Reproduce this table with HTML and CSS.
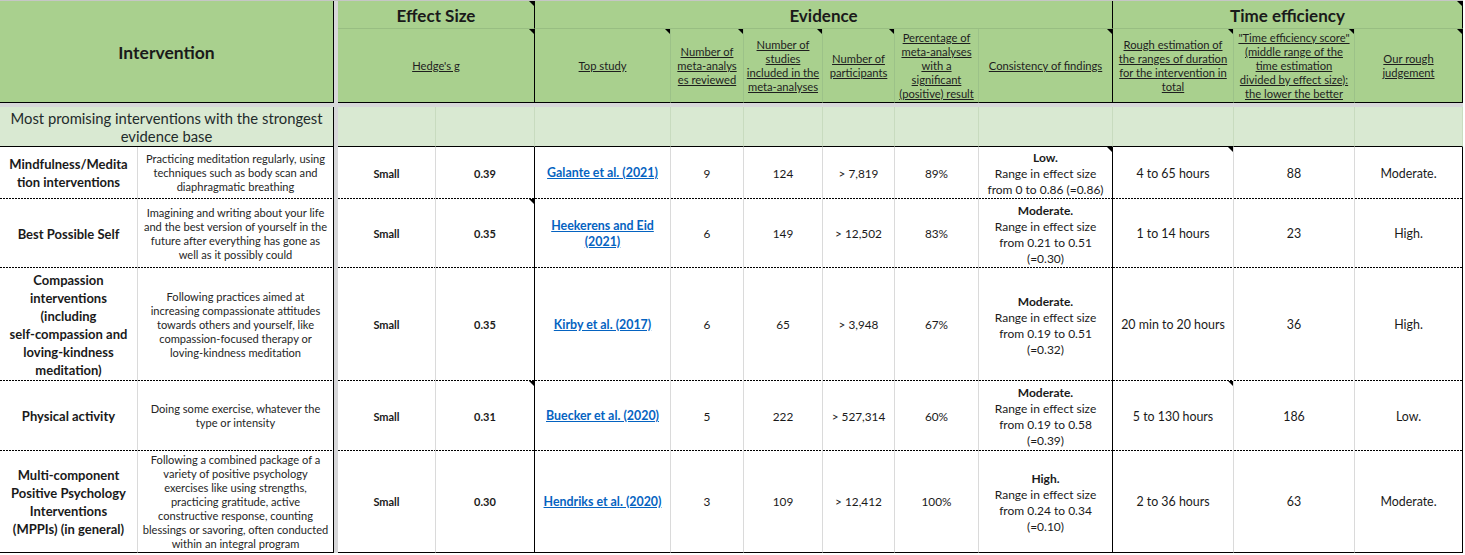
FILE: index.html
```html
<!DOCTYPE html>
<html lang="en">
<head>
<meta charset="utf-8">
<title>Interventions</title>
<link rel="stylesheet" href="styles.css">
</head>
<body>
<div class="sheet">
  <div class="gapc"></div>
  <div class="gapr"></div>

  <div class="c h hi">Intervention</div>
  <div class="c h h1 s2 edge cm">Effect Size</div>
  <div class="c h h1 s6 edge">Evidence</div>
  <div class="c h h1 s3 edge cm">Time efficiency</div>

  <div class="c h h2 s2 edge cm"><span>Hedge's g</span></div>
  <div class="c h h2 cm"><span>Top study</span></div>
  <div class="c h h2 cm"><span>Number of<br>meta-analys<br>es reviewed</span></div>
  <div class="c h h2 cm"><span>Number of<br>studies<br>included in the<br>meta-analyses</span></div>
  <div class="c h h2 cm"><span>Number of<br>participants</span></div>
  <div class="c h h2"><span>Percentage of<br>meta-analyses<br>with a<br>significant<br>(positive) result</span></div>
  <div class="c h h2 edge cm"><span>Consistency of findings</span></div>
  <div class="c h h2 cm"><span>Rough estimation of<br>the ranges of duration<br>for the intervention in<br>total</span></div>
  <div class="c h h2 cm"><span>"Time efficiency score"<br>(middle range of the<br>time estimation<br>divided by effect size):<br>the lower the better</span></div>
  <div class="c h h2 edge cm"><span>Our rough<br>judgement</span></div>

  <div class="c p pt s2">Most promising interventions with the strongest<br>evidence base</div>
  <div class="c p"></div><div class="c p"></div><div class="c p"></div><div class="c p"></div>
  <div class="c p"></div><div class="c p"></div><div class="c p"></div><div class="c p"></div>
  <div class="c p"></div><div class="c p"></div><div class="c p"></div>

  <!-- Row 1 -->
  <div class="c d nm">Mindfulness/Medita<br>tion interventions</div>
  <div class="c d ds">Practicing meditation regularly, using<br>techniques such as body scan and<br>diaphragmatic breathing</div>
  <div class="c d sm">Small</div>
  <div class="c d es">0.39</div>
  <div class="c d st"><a href="#">Galante et al. (2021)</a></div>
  <div class="c d n">9</div>
  <div class="c d n">124</div>
  <div class="c d n">&gt; 7,819</div>
  <div class="c d n">89%</div>
  <div class="c d cf cm"><div><b>Low.</b><br>Range in effect size<br>from 0 to 0.86 (=0.86)</div></div>
  <div class="c d te cm">4 to 65 hours</div>
  <div class="c d te">88</div>
  <div class="c d jd">Moderate.</div>

  <!-- Row 2 -->
  <div class="c d nm">Best Possible Self</div>
  <div class="c d ds">Imagining and writing about your life<br>and the best version of yourself in the<br>future after everything has gone as<br>well as it possibly could</div>
  <div class="c d sm">Small</div>
  <div class="c d es cm">0.35</div>
  <div class="c d st"><a href="#">Heekerens and Eid<br>(2021)</a></div>
  <div class="c d n">6</div>
  <div class="c d n">149</div>
  <div class="c d n">&gt; 12,502</div>
  <div class="c d n">83%</div>
  <div class="c d cf"><div><b>Moderate.</b><br>Range in effect size<br>from 0.21 to 0.51<br>(=0.30)</div></div>
  <div class="c d te">1 to 14 hours</div>
  <div class="c d te">23</div>
  <div class="c d jd">High.</div>

  <!-- Row 3 -->
  <div class="c d nm">Compassion<br>interventions<br>(including<br>self-compassion and<br>loving-kindness<br>meditation)</div>
  <div class="c d ds">Following practices aimed at<br>increasing compassionate attitudes<br>towards others and yourself, like<br>compassion-focused therapy or<br>loving-kindness meditation</div>
  <div class="c d sm">Small</div>
  <div class="c d es">0.35</div>
  <div class="c d st"><a href="#">Kirby et al. (2017)</a></div>
  <div class="c d n">6</div>
  <div class="c d n">65</div>
  <div class="c d n">&gt; 3,948</div>
  <div class="c d n">67%</div>
  <div class="c d cf"><div><b>Moderate.</b><br>Range in effect size<br>from 0.19 to 0.51<br>(=0.32)</div></div>
  <div class="c d te">20 min to 20 hours</div>
  <div class="c d te">36</div>
  <div class="c d jd">High.</div>

  <!-- Row 4 -->
  <div class="c d nm">Physical activity</div>
  <div class="c d ds">Doing some exercise, whatever the<br>type or intensity</div>
  <div class="c d sm">Small</div>
  <div class="c d es cm">0.31</div>
  <div class="c d st"><a href="#">Buecker et al. (2020)</a></div>
  <div class="c d n">5</div>
  <div class="c d n">222</div>
  <div class="c d n">&gt; 527,314</div>
  <div class="c d n">60%</div>
  <div class="c d cf"><div><b>Moderate.</b><br>Range in effect size<br>from 0.19 to 0.58<br>(=0.39)</div></div>
  <div class="c d te cm">5 to 130 hours</div>
  <div class="c d te">186</div>
  <div class="c d jd">Low.</div>

  <!-- Row 5 -->
  <div class="c d last nm">Multi-component<br>Positive Psychology<br>Interventions<br>(MPPIs) (in general)</div>
  <div class="c d last ds">Following a combined package of a<br>variety of positive psychology<br>exercises like using strengths,<br>practicing gratitude, active<br>constructive response, counting<br>blessings or savoring, often conducted<br>within an integral program</div>
  <div class="c d last sm">Small</div>
  <div class="c d last es">0.30</div>
  <div class="c d last st"><a href="#">Hendriks et al. (2020)</a></div>
  <div class="c d last n">3</div>
  <div class="c d last n">109</div>
  <div class="c d last n">&gt; 12,412</div>
  <div class="c d last n">100%</div>
  <div class="c d last cf"><div><b>High.</b><br>Range in effect size<br>from 0.24 to 0.34<br>(=0.10)</div></div>
  <div class="c d last te">2 to 36 hours</div>
  <div class="c d last te">63</div>
  <div class="c d last jd">Moderate.</div>
</div>
</body>
</html>
```

FILE: styles.css
```css
body {
  margin: 0;
  background: #ffffff;
  font-family: Lato, "Open Sans", sans-serif;
  color: #1a1a1a;
}

.sheet {
  display: grid;
  grid-template-columns: 138px 195px 5px 98px 99px 136px 73px 79px 72px 84px 134px 121px 121px 108px;
  grid-template-rows: 28px 74px 4px 40px 52px 69px 113px 70px 102px;
  width: 1463px;
  border-top: 1px solid #c6c6c6;
}

.gapc {
  grid-column: 3;
  grid-row: 1 / -1;
  background: #d7d7d9;
  border-left: 1px solid #000;
  box-sizing: border-box;
}

.gapr {
  grid-column: 1 / -1;
  grid-row: 3;
  background: #d7d7d9;
}

.c {
  display: flex;
  align-items: center;
  justify-content: center;
  text-align: center;
  box-sizing: border-box;
  white-space: nowrap;
  overflow: hidden;
  position: relative;
}

.s2 { grid-column: span 2; }
.s3 { grid-column: span 3; }
.s6 { grid-column: span 6; }

/* header */
.h {
  background: #a9d08e;
  border-right: 1px solid #9cc288;
}

.hi {
  grid-column: 1 / span 2;
  grid-row: 1 / span 2;
  border-right: none;
  border-bottom: 1px solid #000;
  font-weight: 700;
  font-size: 17.5px;
  padding-top: 2px;
}

.h1 {
  border-bottom: 1px solid #98be82;
  font-weight: 700;
  font-size: 17px;
  padding-top: 2px;
}

.h2 {
  border-bottom: 1px solid #000;
  font-size: 11.2px;
  line-height: 14px;
  color: #1e1e1e;
}

.h2 span {
  text-decoration: underline;
}

/* promising row */
.p {
  background: #d9e9d2;
  border-right: 1px solid #c8dbbf;
  border-bottom: 1px solid #000;
}

.pt {
  border-right: none;
  font-size: 14.8px;
  line-height: 18px;
  color: #1f2b2b;
}

/* data cells */
.d {
  background-color: #ffffff;
  background-image: linear-gradient(to right, #000 2px, transparent 2px);
  background-size: 3px 1px;
  background-repeat: repeat-x;
  background-position: 0 100%;
  border-right: 1px solid #dadada;
}

.d.last {
  background-image: none;
  border-bottom: 1px solid #000;
}

.nm {
  font-weight: 700;
  font-size: 13px;
  line-height: 18px;
}

.ds {
  border-right: none;
  font-size: 11.1px;
  line-height: 14px;
  color: #262626;
}

.sm,
.es {
  font-weight: 700;
  font-size: 11px;
}

.st {
  font-size: 12.4px;
  line-height: 16px;
}

.st a {
  color: #0563c1;
  font-weight: 700;
  text-decoration: underline;
}

.n {
  font-size: 11.8px;
}

.cf {
  font-size: 12px;
  line-height: 16px;
  padding-top: 2px;
}

.te,
.jd {
  font-size: 12.4px;
}

.edge,
.es,
.cf,
.jd {
  border-right: 1px solid #000;
}

/* comment indicator */
.cm::after {
  content: "";
  position: absolute;
  top: 0;
  right: 0;
  width: 0;
  height: 0;
  border-top: 5px solid #000;
  border-left: 5px solid transparent;
}
```
